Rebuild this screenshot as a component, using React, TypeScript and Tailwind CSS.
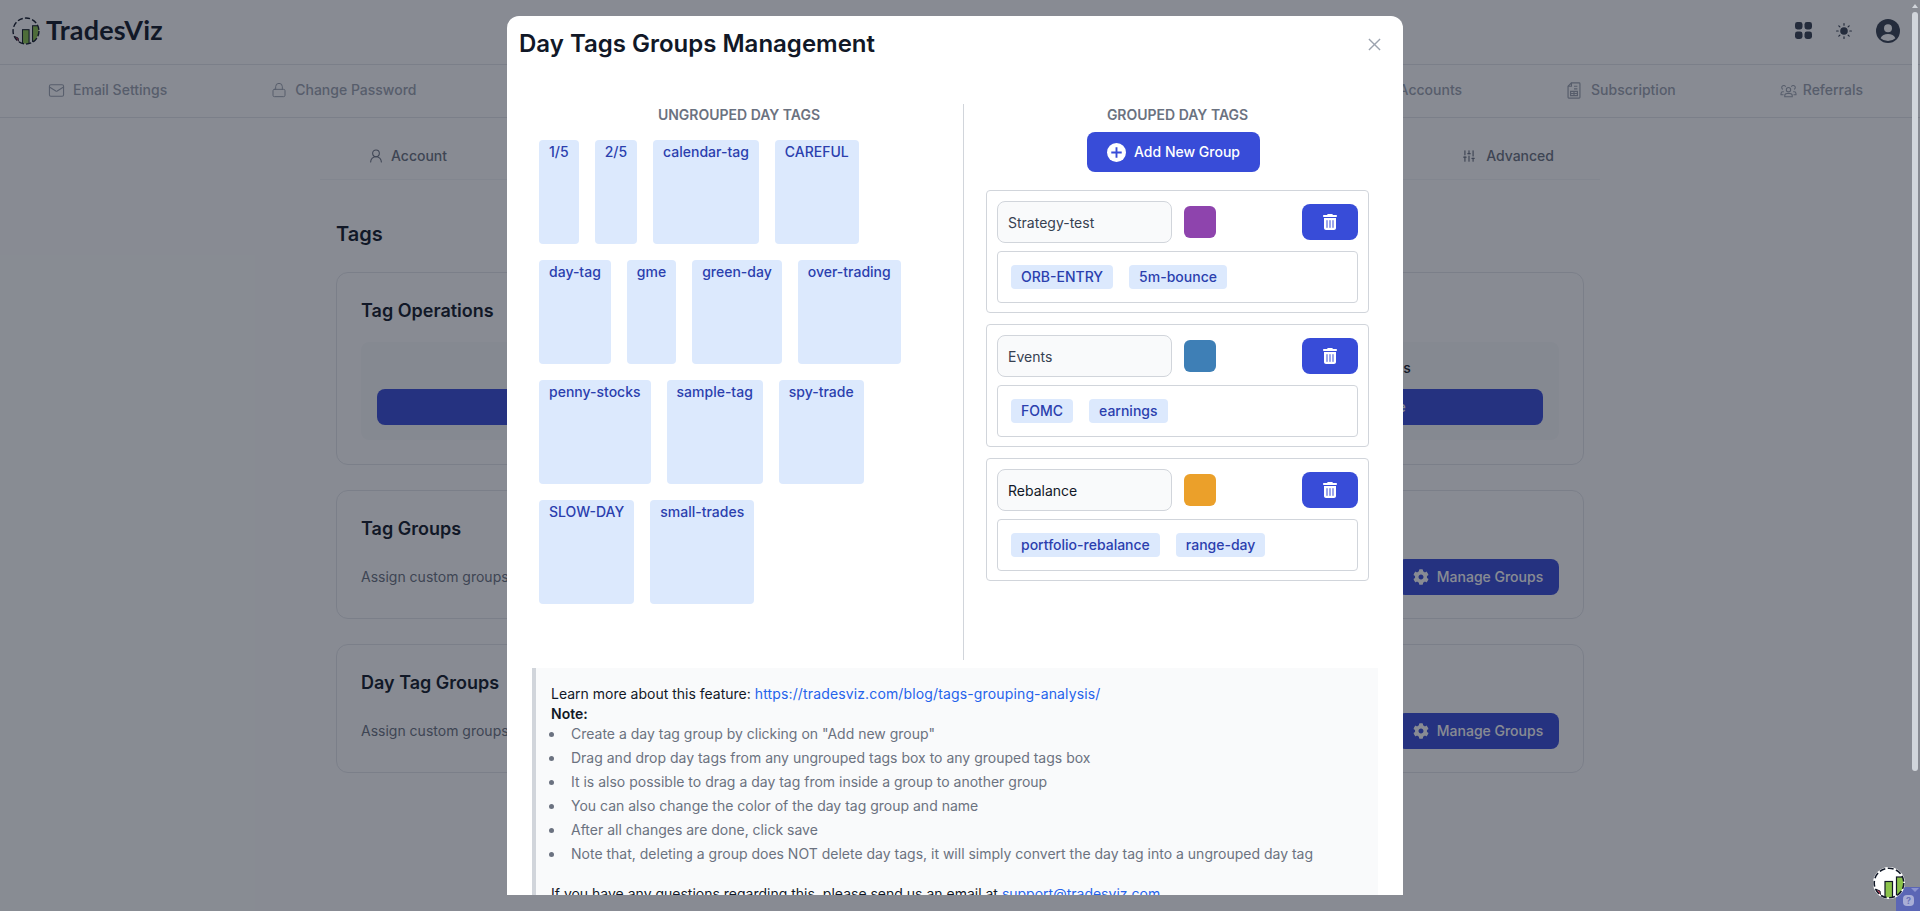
import { Lock, Mail, SlidersVertical, UserRound } from "lucide-react";
import { FaCog } from "react-icons/fa";
import { FaTrashCan } from "react-icons/fa6";

const tagRows = ["1/5", "2/5", "calendar-tag", "CAREFUL", "day-tag", "gme", "green-day", "over-trading", "penny-stocks", "sample-tag", "spy-trade", "SLOW-DAY", "small-trades"];

const groups = [
  { name: "Strategy-test", swatch: "bg-[#8e44ad]", ink: "text-[#374151]", tags: ["ORB-ENTRY", "5m-bounce"] },
  { name: "Events", swatch: "bg-[#3e7fb6]", ink: "text-[#374151]", tags: ["FOMC", "earnings"] },
  { name: "Rebalance", swatch: "bg-[#eba02a]", ink: "text-[#111827]", tags: ["portfolio-rebalance", "range-day"] },
];

const notes = [
  'Create a day tag group by clicking on "Add new group"',
  "Drag and drop day tags from any ungrouped tags box to any grouped tags box",
  "It is also possible to drag a day tag from inside a group to another group",
  "You can also change the color of the day tag group and name",
  "After all changes are done, click save",
  "Note that, deleting a group does NOT delete day tags, it will simply convert the day tag into a ungrouped day tag",
];

function Logo({ id, className }: { id: string; className: string }) {
  return (
    <svg viewBox="0 0 32 32" className={className}>
      <defs>
        <clipPath id={id}>
          <circle cx="16" cy="16" r="14.5" />
        </clipPath>
      </defs>
      <g clipPath={`url(#${id})`}>
        <path d="M0 21 L7 24 L8 32 L0 32 Z" fill="#e0455e" stroke="#111827" strokeWidth="1" />
        <rect x="12" y="14.5" width="7.5" height="18" fill="#8bc34a" stroke="#111827" strokeWidth="1.2" />
        <rect x="23.5" y="10" width="9" height="20" fill="#8bc34a" stroke="#111827" strokeWidth="1.2" />
      </g>
      <circle cx="16" cy="16" r="14.8" fill="none" stroke="#111827" strokeWidth="1.6" strokeDasharray="6 2.5" />
    </svg>
  );
}

function SubscriptionIcon() {
  return (
    <svg viewBox="0 0 16 20" className="w-[14px] h-[17px] text-[#9ca3af]" fill="none" stroke="currentColor" strokeWidth="1.4">
      <path d="M5 1h9a1 1 0 0 1 1 1v16a1 1 0 0 1-1 1H2a1 1 0 0 1-1-1V5z" />
      <path d="M5 1v4H1M8 5h4M8 8h4M4 11h8v5H4zM8 11v5M4 13.5h8" />
    </svg>
  );
}

function ReferralsIcon() {
  return (
    <svg viewBox="0 0 20 18" className="w-[17px] h-[15px] text-[#9ca3af]" fill="none" stroke="currentColor" strokeWidth="1.3">
      <circle cx="10" cy="8" r="2.6" />
      <path d="M5.5 16.5v-1.2c0-1.6 1.2-2.8 2.8-2.8h3.4c1.6 0 2.8 1.2 2.8 2.8v1.2z" />
      <path d="M6.5 4.5A2.4 2.4 0 1 0 3.4 7.6M13.5 4.5a2.4 2.4 0 1 1 3.1 3.1M4.4 10.5H3.2C2 10.5 1 11.5 1 12.8v1.2h3M15.6 10.5h1.2c1.2 0 2.2 1 2.2 2.3v1.2h-3" />
    </svg>
  );
}

function AppsIcon() {
  return (
    <svg viewBox="0 0 17 17" className="w-[17px] h-[17px] text-[#374151]" fill="currentColor">
      <rect x="0" y="0" width="7.5" height="7.5" rx="2.4" />
      <rect x="9.5" y="0" width="7.5" height="7.5" rx="2.4" />
      <rect x="0" y="9.5" width="7.5" height="7.5" rx="2.4" />
      <rect x="9.5" y="9.5" width="7.5" height="7.5" rx="2.4" />
    </svg>
  );
}

function SunIcon() {
  return (
    <svg viewBox="0 0 16 16" className="w-4 h-4 text-[#374151]" fill="none" stroke="currentColor" strokeWidth="1.2" strokeLinecap="round">
      <circle cx="8" cy="8" r="3.8" fill="currentColor" stroke="none" />
      <path d="M8 .6v1.6M8 13.8v1.6M.6 8h1.6M13.8 8h1.6M2.8 2.8l1.1 1.1M12.1 12.1l1.1 1.1M2.8 13.2l1.1-1.1M12.1 3.9l1.1-1.1" />
    </svg>
  );
}

function AvatarIcon() {
  return (
    <svg viewBox="0 0 24 24" className="w-6 h-6">
      <circle cx="12" cy="12" r="12" fill="#374151" />
      <circle cx="12" cy="9.2" r="4" fill="#ffffff" />
      <path d="M4.6 19.2c1.3-3 4-4.2 7.4-4.2s6.1 1.2 7.4 4.2A11 11 0 0 1 12 22a11 11 0 0 1-7.4-2.8z" fill="#ffffff" />
    </svg>
  );
}

function Tag({ label, tall }: { label: string; tall?: boolean }) {
  return (
    <span className={`inline-block px-2.5 py-0.5 rounded text-sm leading-5 font-medium bg-[#dce9fd] text-[#2b3fae] whitespace-nowrap ${tall ? "h-[104px]" : "h-6"}`}>
      {label}
    </span>
  );
}

function SubmitButton({ label, className }: { label: string; className: string }) {
  return (
    <div className={`h-9 rounded-lg bg-[#384cd8] text-white text-sm font-medium ${className}`}>
      {label}
    </div>
  );
}

function ManageCard({ title }: { title: string }) {
  return (
    <div className="border border-[#e5e7eb] rounded-xl p-6 pb-[23px] mt-[25px]">
      <h3 className="text-lg leading-7 font-semibold text-[#111827]">{title}</h3>
      <div className="flex items-center justify-between mt-4">
        <p className="text-sm text-[#6b7280]">Assign custom groups to your tags to organize and analyze them together</p>
        <div className="h-9 w-[162px] rounded-lg bg-[#384cd8] text-white text-sm font-medium flex items-center justify-center gap-2">
          <FaCog className="w-4 h-4" />
          Manage Groups
        </div>
      </div>
    </div>
  );
}

function Page() {
  return (
    <div>
      <header className="h-[65px] border-b border-[#e5e7eb] flex items-center justify-between pl-3 pr-5 pb-[3px]">
        <div className="flex items-center gap-[6px]">
          <Logo id="logo-top" className="w-7 h-7" />
          <span className="font-['Lato',sans-serif] text-[27px] font-bold text-[#111827] tracking-[0.2px]">TradesViz</span>
        </div>
        <div className="flex items-center gap-[24px]">
          <AppsIcon />
          <SunIcon />
          <AvatarIcon />
        </div>
      </header>
      <nav className="h-[53px] border-b border-[#e5e7eb] flex items-center justify-between pl-12 pr-[57px] pb-[2px] text-sm font-medium text-[#9ca3af]">
        <div className="flex items-center gap-[104px]">
          <span className="flex items-center gap-2"><Mail className="w-[17px] h-[17px]" strokeWidth={1.5} />Email Settings</span>
          <span className="flex items-center gap-2"><Lock className="w-4 h-4" strokeWidth={1.5} />Change Password</span>
        </div>
        <div className="flex items-center">
          <span>Trading Accounts</span>
          <span className="flex items-center gap-2.5 ml-[105px]"><SubscriptionIcon />Subscription</span>
          <span className="flex items-center gap-1.5 ml-[104px]"><ReferralsIcon />Referrals</span>
        </div>
      </nav>
      <main className="w-[1280px] mx-auto">
        <div className="h-[62px] border-b border-[#f3f4f6] flex items-center justify-between pl-12 pr-[46px] pt-[14px] text-sm font-medium text-[#6b7280]">
          <span className="flex items-center gap-[7px]"><UserRound className="w-4 h-4" strokeWidth={1.6} />Account</span>
          <span className="flex items-center gap-2.5"><SlidersVertical className="w-[14px] h-[14px]" strokeWidth={2} />Advanced</span>
        </div>
        <div className="px-[16px] pt-[40px]">
          <h2 className="text-xl leading-7 font-semibold text-[#111827]">Tags</h2>
          <div className="border border-[#e5e7eb] rounded-xl p-6 mt-[24px]">
            <h3 className="text-lg leading-7 font-semibold text-[#111827]">Tag Operations</h3>
            <div className="bg-[#f9fafb] rounded-lg p-4 pb-[15px] mt-[17px] grid grid-cols-3 gap-5">
              {["Rename Day Tag", "Delete Day Tag", "Merge Two Tags"].map((t) => (
                <div key={t} className="flex flex-col items-center">
                  <p className="text-sm leading-5 font-medium text-[#111827]">{t}</p>
                  <SubmitButton label="Manage Merge" className="w-full mt-[11px] flex items-center justify-center" />
                </div>
              ))}
            </div>
          </div>
          <ManageCard title="Tag Groups" />
          <ManageCard title="Day Tag Groups" />
        </div>
      </main>
    </div>
  );
}

function GroupCard({ name, swatch, ink, tags }: (typeof groups)[number]) {
  return (
    <div className="border border-[#d1d5db] rounded p-[10px] h-[123px]">
      <div className="flex items-center">
        <input readOnly value={name} className={`w-[175px] h-[42px] rounded-lg border border-[#d1d5db] bg-[#f9fafb] px-2.5 text-sm outline-none ${ink}`} />
        <div className={`w-8 h-8 rounded-md ml-3 ${swatch}`} />
        <div className="w-14 h-9 rounded-lg bg-[#384cd8] text-white flex items-center justify-center ml-auto">
          <FaTrashCan className="w-[14px] h-4" />
        </div>
      </div>
      <div className="border border-[#d1d5db] rounded h-[52px] mt-2 px-[13px] flex items-center gap-4">
        {tags.map((t) => (
          <Tag key={t} label={t} />
        ))}
      </div>
    </div>
  );
}

function Modal() {
  return (
    <div className="w-[896px] h-[879px] bg-white rounded-t-xl overflow-hidden">
      <div className="flex items-center justify-between pl-3 pr-[22px] pt-3">
        <h1 className="text-2xl leading-8 font-semibold text-[#111827]">Day Tags Groups Management</h1>
        <svg viewBox="0 0 14 14" className="w-[13px] h-[13px] text-[#9ca3af]" fill="none" stroke="currentColor" strokeWidth="1.5">
          <path d="M1 1l12 12M13 1L1 13" />
        </svg>
      </div>
      <div className="flex mt-[44px] pl-3 h-[556px]">
        <div className="w-[444px] pr-1">
          <p className="text-sm leading-5 font-semibold text-[#6b7280] text-center uppercase pt-px">Ungrouped Day Tags</p>
          <div className="flex flex-wrap gap-4 mt-[15px] pl-5 w-[410px]">
            {tagRows.map((t) => (
              <Tag key={t} label={t} tall />
            ))}
          </div>
        </div>
        <div className="w-[428px] border-l border-[#d1d5db]">
          <p className="text-sm leading-5 font-semibold text-[#6b7280] text-center uppercase pt-px">Grouped Day Tags</p>
          <div className="flex justify-center mt-[7px] pr-2">
            <div className="h-10 w-[173px] rounded-lg bg-[#384cd8] text-white text-sm font-medium flex items-center justify-center gap-2">
              <svg viewBox="0 0 20 20" className="w-[19px] h-[19px]">
                <circle cx="10" cy="10" r="10" fill="#ffffff" />
                <path d="M10 4.5v11M4.5 10h11" stroke="#384cd8" strokeWidth="2" />
              </svg>
              Add New Group
            </div>
          </div>
          <div className="mx-[22px] mt-[18px] flex flex-col gap-[11px]">
            {groups.map((g) => (
              <GroupCard key={g.name} {...g} />
            ))}
          </div>
        </div>
      </div>
      <div className="mx-[25px] mt-2 border-l-4 border-[#d1d5db] bg-[#f9fafb] p-4 pl-[15px] text-sm leading-5 text-[#111827]">
        <p>Learn more about this feature: <span className="text-[#2563eb] tracking-[0.14px]">https://tradesviz.com/blog/tags-grouping-analysis/</span></p>
        <p className="font-semibold">Note:</p>
        <ul className="list-disc pl-[14px] flex flex-col gap-1 text-[#6b7280]">
          {notes.map((n) => (
            <li key={n} className="pl-[6px]">{n}</li>
          ))}
        </ul>
        <p className="mt-5">If you have any questions regarding this, please send us an email at <span className="text-[#2563eb]">support@tradesviz.com</span></p>
      </div>
    </div>
  );
}

export default function App() {
  return (
    <div className="h-screen overflow-hidden bg-white font-['Inter',sans-serif] relative">
      <Page />
      {/* overlay */}
      <div className="absolute inset-0 bg-[#111827]/50 flex justify-center pr-[10px] pt-4">
        <Modal />
      </div>
      {/* page scrollbar */}
      <div className="absolute top-0 right-0 w-2 h-full">
        <div className="w-0 h-0 ml-0 mt-[4px] border-x-[3px] border-x-transparent border-b-[4px] border-b-[#d1d5db]" />
        <div className="w-[6px] h-[759px] mt-[4px] rounded-full bg-[#d1d5db]" />
      </div>
      {/* help widget */}
      <div className="absolute right-0 bottom-0 w-6 h-6 bg-[#5b66b5] flex items-end pl-[7px] pb-[5px]">
        <span className="w-[11px] h-[11px] rounded-sm bg-[#a9aed6] text-[#6a72b8] text-[9px] leading-[11px] font-bold text-center">?</span>
        <div className="absolute top-px right-px w-0 h-0 border-x-[4px] border-x-transparent border-t-[4px] border-t-[#8b93cf]" />
      </div>
      <div className="absolute right-[15px] bottom-3 w-8 h-8 rounded-full bg-white">
        <Logo id="logo-widget" className="w-8 h-8" />
      </div>
    </div>
  );
}
